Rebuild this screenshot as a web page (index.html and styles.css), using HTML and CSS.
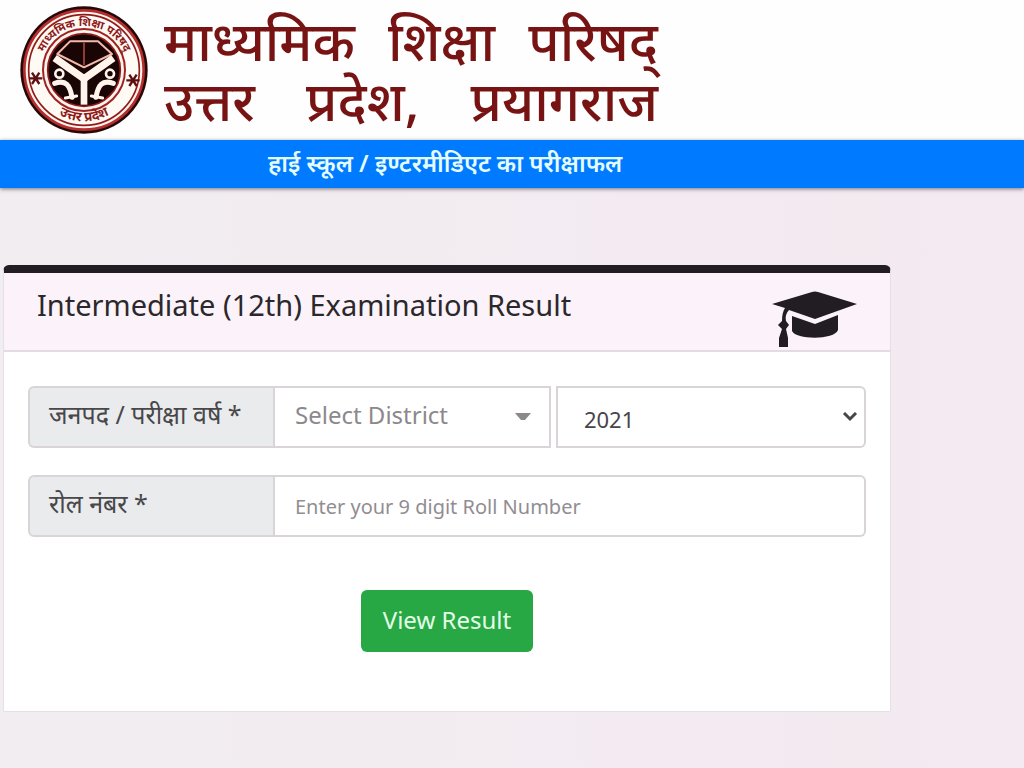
FILE: index.html
```
<!DOCTYPE html>
<html lang="hi">
<head>
    <meta charset="UTF-8">
    <meta name="viewport" content="width=device-width, initial-scale=1.0">
    <title>माध्यमिक शिक्षा परिषद् उत्तर प्रदेश, प्रयागराज</title>
    <link rel="stylesheet" href="styles.css">
</head>
<body>
    <header class="header">
        <svg class="logo" viewBox="30 14 384 384" aria-hidden="true">
            <defs>
                <path id="arcTop" d="M90 206 A132 132 0 0 1 354 206"/>
                <path id="arcBottom" d="M68 206 A154 154 0 0 0 376 206"/>
            </defs>
            <circle cx="222" cy="206" r="191" fill="#260808"/>
            <circle cx="222" cy="206" r="179" fill="#fff3ec" stroke="#b32e2c" stroke-width="8"/>
            <circle cx="222" cy="206" r="166" fill="#fffaf4" stroke="#8e1b1b" stroke-width="5"/>
            <circle cx="222" cy="206" r="123" fill="#fff3ec" stroke="#9d2422" stroke-width="6"/>
            <circle cx="222" cy="206" r="109" fill="#1a0505" stroke="#8e1b1b" stroke-width="5"/>
            <text class="logo-text"><textPath href="#arcTop" startOffset="50%">माध्यमिक शिक्षा परिषद्</textPath></text>
            <text class="logo-text logo-state"><textPath href="#arcBottom" startOffset="50%">उत्तर प्रदेश</textPath></text>
            <g stroke="#5c1010" stroke-width="7">
                <path d="M57 231h40M66 214l22 34M88 214l-22 34"/>
                <path d="M349 237h40M358 220l22 34M380 220l-22 34"/>
            </g>
            <!-- book -->
            <path d="M180 120h84l42 38-84 40-80-40z" fill="#1a0505" stroke="#f6b9a9" stroke-width="6" stroke-linejoin="round"/>
            <path d="M222 124v68" stroke="#c95a50" stroke-width="4"/>
            <!-- rivers -->
            <path d="M134 170l88 62 88-62" fill="none" stroke="#fff3ec" stroke-width="22"/>
            <path d="M222 224v86" stroke="#fff3ec" stroke-width="20"/>
            <!-- fishes -->
            <g fill="none" stroke="#fff3ec" stroke-width="15" stroke-linecap="round">
                <path d="M134 246c34-12 46 6 52 42"/>
                <path d="M310 246c-34-12-46 6-52 42"/>
                <path d="M166 290l34-6" stroke-width="9"/>
                <path d="M278 290l-34-6" stroke-width="9"/>
            </g>
            <g fill="#1a0505" stroke="#fff3ec" stroke-width="8">
                <circle cx="148" cy="217" r="12"/>
                <circle cx="300" cy="217" r="12"/>
            </g>
        </svg>
        <h1 class="title">
            <span class="title-line"><span>माध्यमिक</span> <span>शिक्षा</span> <span>परिषद्</span></span>
            <span class="title-line"><span>उत्तर</span> <span>प्रदेश,</span> <span>प्रयागराज</span></span>
        </h1>
    </header>

    <div class="navbar">हाई स्कूल / इण्टरमीडिएट का परीक्षाफल</div>

    <main class="card">
        <div class="card-header">
            <h2>Intermediate (12th) Examination Result</h2>
            <svg class="cap" viewBox="0 0 86 58" aria-hidden="true">
                <path d="M0 13L40 1q3-1 6 0l39 12-42 15-26-9c-3 3-4 7-3 11l3 4-3 4 2 9v9H7v-9l3-9-4-4 4-4c0-6 1-10 3-13z" fill="#211d22"/>
                <path d="M20 25l23 8 23-9v15c-3 10-42 10-46 1z" fill="#211d22"/>
            </svg>
        </div>
        <form class="card-body" onsubmit="return false">
            <div class="row">
                <label class="label" for="district">जनपद / परीक्षा वर्ष *</label>
                <div class="select district">
                    <select id="district">
                        <option>Select District</option>
                    </select>
                    <svg class="arrow" viewBox="0 0 16 9" aria-hidden="true"><path d="M0 1h16L10 8H6z" fill="#8c888c"/></svg>
                </div>
                <div class="select year">
                    <select aria-label="Year">
                        <option>2021</option>
                    </select>
                    <svg class="arrow" viewBox="0 0 16 10" aria-hidden="true"><path d="M2 1l6 6 6-6" fill="none" stroke="#48444a" stroke-width="3"/></svg>
                </div>
            </div>
            <div class="row">
                <label class="label" for="roll">रोल नंबर *</label>
                <input class="roll" id="roll" type="text" placeholder="Enter your 9 digit Roll Number">
            </div>
            <button class="button" type="submit">View Result</button>
        </form>
    </main>
</body>
</html>
```
FILE: styles.css
```
* {
    box-sizing: border-box;
}
body {
    margin: 0;
    min-height: 100vh;
    background: linear-gradient(to right, #f1edf1, #f4eaf1);
    font-family: "Noto Sans", sans-serif;
    color: #2b282c;
}
.header {
    display: flex;
    align-items: center;
    gap: 16px;
    height: 140px;
    padding: 0 20px;
    background: #fefefe;
}
.logo {
    width: 128px;
    height: 128px;
    flex: none;
}
.logo-text {
    font-size: 34px;
    font-weight: bold;
    fill: #8e1b1b;
    text-anchor: middle;
}
.logo-state {
    font-size: 40px;
}
.title {
    width: 494px;
    margin: 0;
    font-size: 54px;
    line-height: 60px;
    font-weight: 500;
    color: #771413;
}
.title-line {
    display: flex;
    justify-content: space-between;
}
.navbar {
    position: relative;
    height: 48px;
    padding-left: 268px;
    background: #007bff;
    box-shadow: 0 1px 4px #77727a;
    color: #e4fbff;
    font-size: 24px;
    line-height: 46px;
    font-weight: 600;
}
.card {
    margin: 77px 13% 0 3px;
    background: #fff;
    border: 1px solid #e5e0e5;
    border-top: 8px solid #211d22;
    border-radius: 6px 6px 2px 2px;
}
.card-header {
    display: flex;
    justify-content: space-between;
    height: 79px;
    padding: 12px 32px 0 33px;
    background: #fbf3f9;
    border-bottom: 2px solid #e3dde3;
}
.card-header h2 {
    margin: 0;
    font-size: 29px;
    line-height: 40px;
    font-weight: normal;
}
.cap {
    width: 86px;
    height: 58px;
    margin-top: 6px;
}
.card-body {
    padding: 34px 24px 59px;
}
.row {
    display: flex;
    height: 62px;
    margin-bottom: 27px;
}
.label {
    width: 247px;
    padding-left: 19px;
    border: 2px solid #d8d4d8;
    border-radius: 6px 0 0 6px;
    background: #eaebed;
    color: #48474a;
    font-size: 25px;
    line-height: 52px;
}
.select {
    position: relative;
}
.district {
    flex: 276;
    margin-right: 5px;
}
.year {
    flex: 310;
}
select, .roll {
    width: 100%;
    height: 62px;
    padding: 0 20px;
    border: 2px solid #d8d4d8;
    background: #fff;
    font-family: inherit;
}
select {
    appearance: none;
}
.district select {
    padding-bottom: 6px;
    border-left: 0;
    border-radius: 0;
    color: #8c888c;
    font-size: 24px;
}
.year select {
    padding: 4px 26px 0;
    border-radius: 0 6px 6px 0;
    color: #48444a;
    font-size: 22px;
}
.arrow {
    position: absolute;
    top: 26px;
    right: 20px;
    width: 16px;
    height: 9px;
    pointer-events: none;
}
.year .arrow {
    right: 8px;
    height: 10px;
}
.roll {
    flex: 1;
    border-left: 0;
    border-radius: 0 6px 6px 0;
    font-size: 20px;
}
.roll::placeholder {
    color: #918d91;
}
.button {
    display: block;
    margin: 53px auto 0;
    height: 62px;
    padding: 0 22px 4px;
    background: #28a745;
    border: none;
    border-radius: 6px;
    color: #e3ffe6;
    font-family: inherit;
    font-size: 24px;
    cursor: pointer;
}
```
